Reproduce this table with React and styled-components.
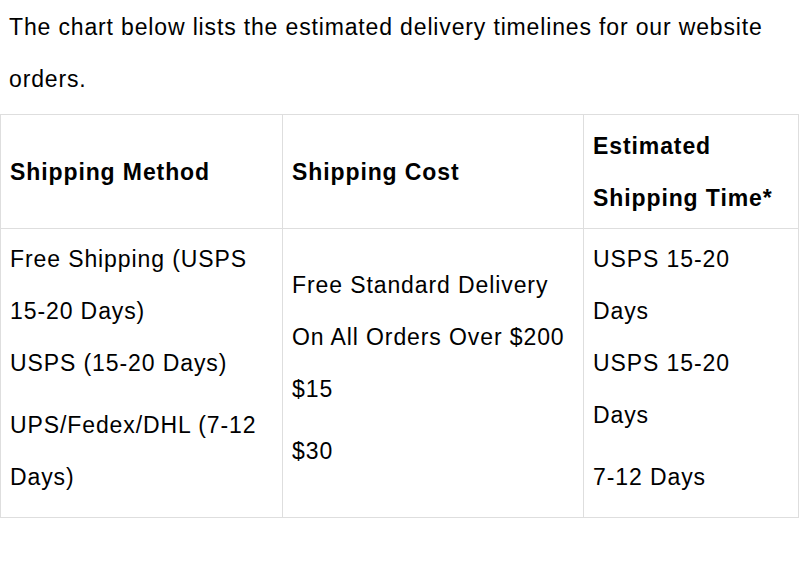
import React from 'react';
import styled, { createGlobalStyle } from 'styled-components';

const GlobalStyle = createGlobalStyle`
    body {
        margin: 0;
        background: #fff;
        color: #000;
        font-family: "Liberation Sans", Arial, sans-serif;
        font-size: 23px;
    }
`;

const rows = [
    {
        method: [['Free Shipping (USPS 15-20 Days)', 'USPS (15-20 Days)'], ['UPS/Fedex/DHL (7-12 Days)']],
        cost: [['Free Standard Delivery On All Orders Over $200', '$15'], ['$30']],
        time: [['USPS 15-20 Days', 'USPS 15-20 Days'], ['7-12 Days']],
    },
];

function CellText({ blocks }) {
    return blocks.map((lines, i) => (
        <Para key={i}>
            {lines.map((line, j) => (
                <React.Fragment key={j}>
                    {j > 0 && <br />}
                    {line}
                </React.Fragment>
            ))}
        </Para>
    ));
}

function App() {
    return (
        <Page>
            <GlobalStyle />
            <Intro>The chart below lists the estimated delivery timelines for our website orders.</Intro>
            <Table>
                <colgroup>
                    <col style={{ width: 282 }} />
                    <col style={{ width: 301 }} />
                    <col />
                </colgroup>
                <thead>
                    <tr>
                        <Head>Shipping Method</Head>
                        <Head>Shipping Cost</Head>
                        <Head>Estimated Shipping Time*</Head>
                    </tr>
                </thead>
                <tbody>
                    {rows.map((r, i) => (
                        <tr key={i}>
                            <Cell><CellText blocks={r.method} /></Cell>
                            <Cell><CellText blocks={r.cost} /></Cell>
                            <Cell><CellText blocks={r.time} /></Cell>
                        </tr>
                    ))}
                </tbody>
            </Table>
        </Page>
    );
}

const Page = styled.div`
    width: 799px;
`;

const Intro = styled.p`
    margin: 0 0 9px;
    padding: 1px 9px 0;
    line-height: 52px;
    letter-spacing: 0.85px;
`;

const Table = styled.table`
    width: 799px;
    border-collapse: collapse;
    table-layout: fixed;
`;

const Head = styled.th`
    border: 1px solid #dedede;
    padding: 5px 9px 4px;
    text-align: left;
    vertical-align: middle;
    font-weight: bold;
    line-height: 52px;
    letter-spacing: 0.9px;
`;

const Cell = styled.td`
    border: 1px solid #dedede;
    padding: 4px 9px;
    vertical-align: middle;
    line-height: 52px;
    letter-spacing: 0.9px;
`;

const Para = styled.p`
    margin: 0 0 10px;
`;

export default App;
